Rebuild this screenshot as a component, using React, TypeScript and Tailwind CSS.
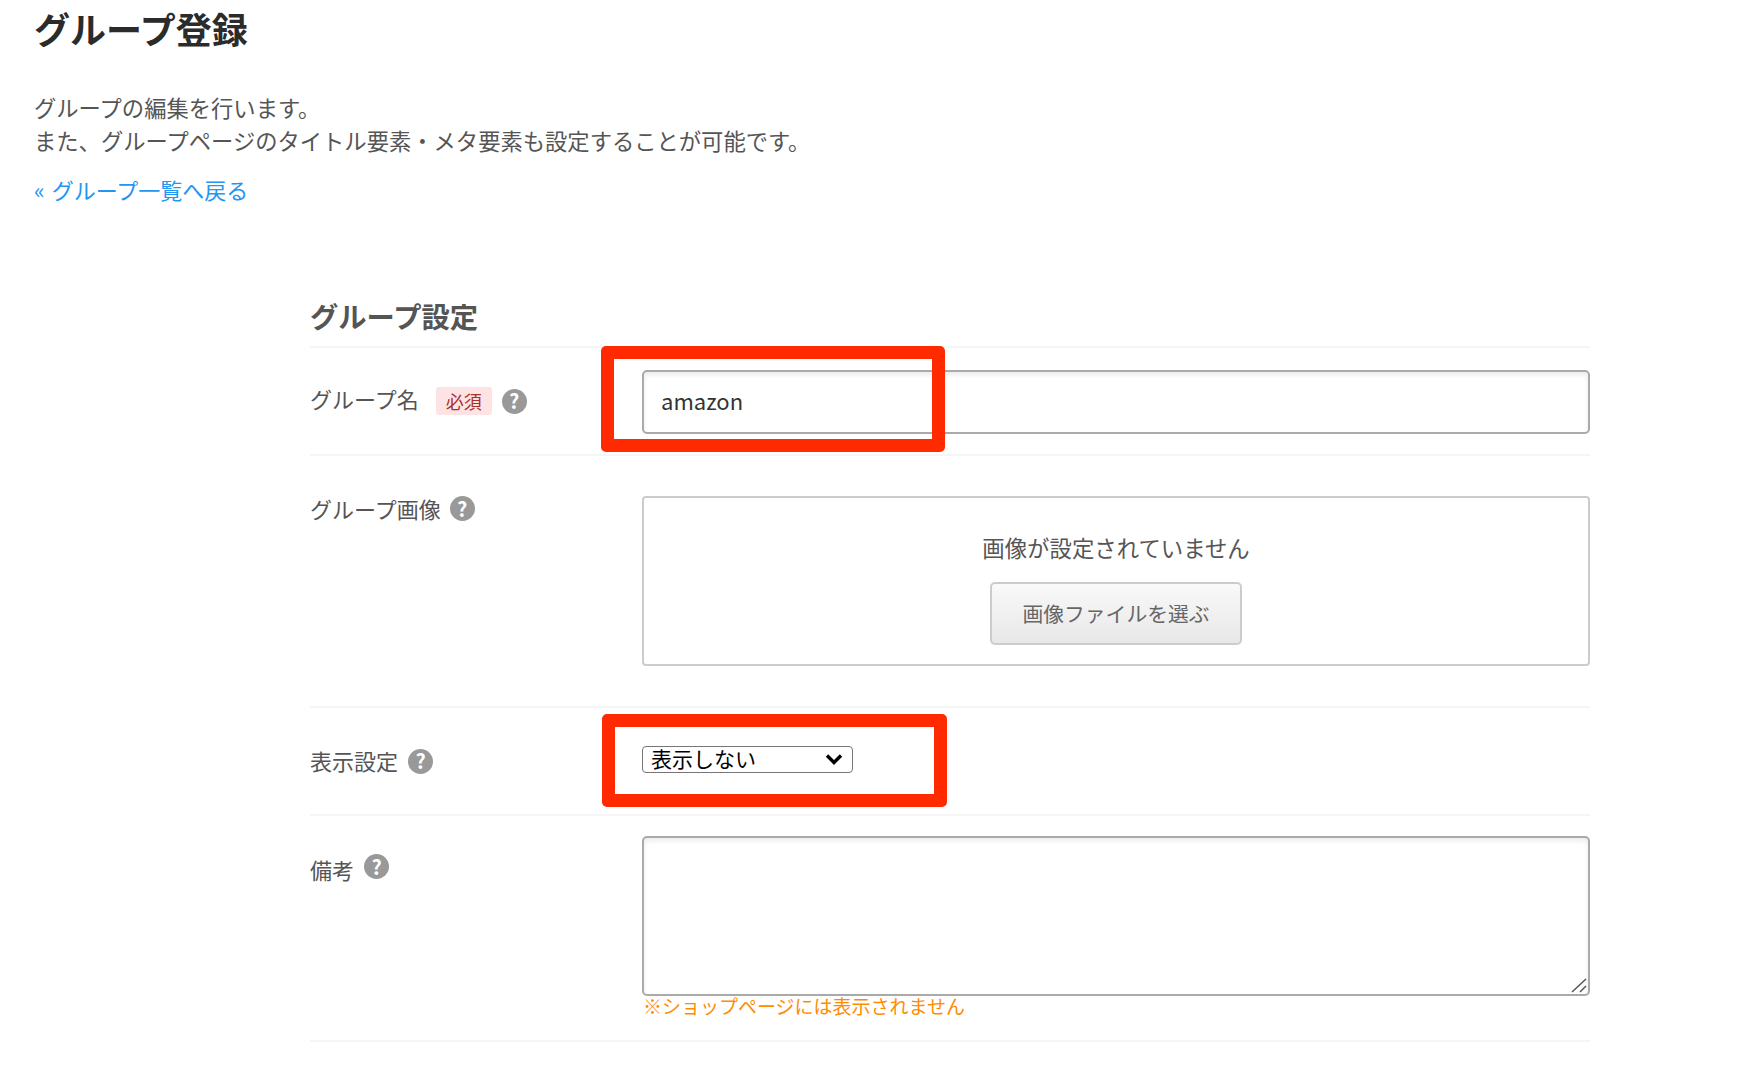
import React from 'react';

const font = { fontFamily: '"Noto Sans CJK JP", "Liberation Sans", sans-serif' };

const Help = ({ className = '' }: { className?: string }) => (
  <span className={`flex w-[25px] h-[25px] shrink-0 items-center justify-center rounded-full bg-[#999999] text-[20px] leading-none font-bold text-white ${className}`}>
    ?
  </span>
);

// red annotation frame laid over the screenshot
const RedFrame = ({ className }: { className: string }) => (
  <div className={`absolute border-[13px] border-[#ff2a00] rounded-[5px] pointer-events-none ${className}`} />
);

const App = () => {
  return (
    <div className="min-h-[1086px] bg-white text-[22px] text-[#555555] overflow-hidden" style={font}>
      <div className="pl-[34px]">
        <h1 className="text-[36px] leading-[56px] font-bold text-[#2b2b2b]">グループ登録</h1>
        <p className="mt-[35px] text-[22.3px] leading-[33px]">
          グループの編集を行います。
          <br />
          また、グループページのタイトル要素・メタ要素も設定することが可能です。
        </p>
        <a className="flex mt-[16px] text-[22.3px] leading-[33px] text-[#2196f3]">
          <span className="mr-[7px]">«</span>
          <span className="w-[190px] whitespace-nowrap text-[22px]">グループ一覧へ戻る</span>
        </a>
      </div>

      <div className="ml-[310px] w-[1280px] mt-[82px]">
        <h2 className="h-[60px] pt-[8px] text-[28.3px] leading-[40px] font-bold text-[#555555] border-b-2 border-[#f5f5f5]">
          グループ設定
        </h2>

        {/* グループ名 */}
        <div className="relative flex h-[108px] items-center border-b-2 border-[#f5f5f5]">
          <div className="flex w-[332px] items-center">
            <span className="-mt-[6px]">グループ名</span>
            <span className="ml-[17px] flex h-[28px] w-[56px] items-center justify-center rounded-[3px] bg-[#fde3e3] text-[18px] text-[#a83232]">
              必須
            </span>
            <Help className="ml-[10px]" />
          </div>
          <input
            readOnly
            value="amazon"
            className="mt-[1px] h-[64px] w-[948px] rounded-[5px] border-2 border-[#aaaaaa] px-[17px] pb-[3px] text-[22px] text-[#333333] shadow-[inset_0_3px_5px_rgba(0,0,0,0.08)]"
          />
          <RedFrame className="left-[291px] -top-[2px] w-[344px] h-[106px]" />
        </div>

        {/* グループ画像 */}
        <div className="flex h-[252px] border-b-2 border-[#f5f5f5] pt-[40px]">
          <div className="flex w-[332px] items-center self-start gap-[9px] -mt-[4px]">
            <span>グループ画像</span>
            <Help />
          </div>
          <div className="flex h-[170px] w-[948px] flex-col items-center rounded-[4px] border-2 border-[#cccccc] pt-[33px]">
            <span className="text-[22.4px] leading-[32px]">画像が設定されていません</span>
            <button className="mt-[19px] h-[63px] w-[252px] rounded-[5px] border-2 border-[#cccccc] bg-gradient-to-b from-[#f9f9f9] to-[#e8e8e8] text-[20.8px] text-[#666666]">
              画像ファイルを選ぶ
            </button>
          </div>
        </div>

        {/* 表示設定 */}
        <div className="relative flex h-[108px] items-center border-b-2 border-[#f5f5f5]">
          <div className="flex w-[332px] items-center gap-[10px]">
            <span className="-mt-[1px]">表示設定</span>
            <Help />
          </div>
          <button className="-mt-[3px] flex h-[27px] w-[211px] items-center justify-between rounded-[4px] border border-[#767676] bg-white pl-[8px] pr-[9px] pb-[2px] text-[21px] leading-[25px] text-black">
            <span>表示しない</span>
            <svg width="18" height="12" viewBox="0 0 18 12" fill="none" stroke="#000000" strokeWidth="3.4">
              <path d="M2 2.5 L9 9.5 L16 2.5" />
            </svg>
          </button>
          <RedFrame className="left-[292px] top-[6px] w-[345px] h-[93px]" />
        </div>

        {/* 備考 */}
        <div className="flex h-[226px] border-b-2 border-[#f5f5f5] pt-[20px]">
          <div className="flex w-[332px] items-center self-start gap-[10px] pt-[11px]">
            <span className="mt-[6px]">備考</span>
            <Help />
          </div>
          <div className="w-[948px]">
            <div className="relative">
              <textarea
                readOnly
                className="block h-[160px] w-[948px] resize-none rounded-[5px] border-2 border-[#aaaaaa] shadow-[inset_0_3px_5px_rgba(0,0,0,0.08)]"
              />
              <svg className="absolute right-[3px] bottom-[3px]" width="16" height="15" viewBox="0 0 16 15" stroke="#555555" strokeWidth="1.5">
                <path d="M1 14 L15 1 M9 14 L15 8" />
              </svg>
            </div>
            <p className="-mt-[2px] pl-[1px] text-[19px] leading-[24px] text-[#ff8c00]">※ショップページには表示されません</p>
          </div>
        </div>
      </div>
    </div>
  );
};

export default App;
